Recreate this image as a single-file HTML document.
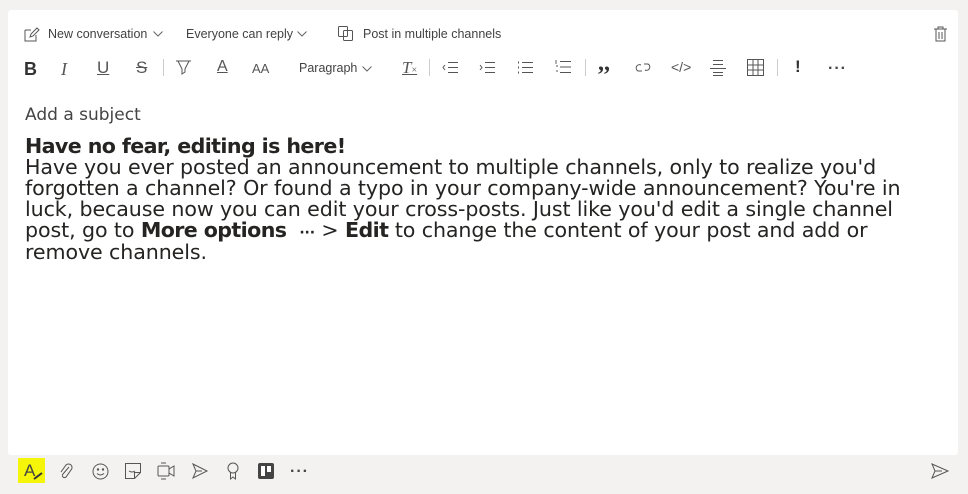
<!DOCTYPE html>
<html><head><meta charset="utf-8"><style>
html,body{margin:0;padding:0;width:968px;height:494px;background:#f3f2f1;overflow:hidden;font-family:"Liberation Sans",sans-serif;color:#252423}
.panel{position:absolute;left:8px;top:10px;width:950px;height:445px;background:#fff;border-radius:3px}
.a{position:absolute;white-space:nowrap}
.tb{font-size:12.5px;color:#424242}
svg{position:absolute;overflow:visible}
.body{font-family:"DejaVu Sans",sans-serif;font-size:20.6px;line-height:21px;color:#252423;letter-spacing:-0.1px}
.body div{white-space:nowrap;height:21px}
.body b{letter-spacing:-0.6px}
</style></head><body>
<div class="panel"></div>
<!-- top row -->
<svg style="left:24px;top:27px" width="15" height="15" viewBox="0 0 15 15" fill="none" stroke="#555" stroke-width="1"><path d="M1 3h6M1 3v11h11V8"/><path d="M6 10l1-3 6-6 2 2-6 6z"/></svg>
<div class="a tb" style="left:48px;top:27px">New conversation</div>
<svg style="left:153px;top:31px" width="10" height="6" fill="none" stroke="#666"><path d="M0.5 0.5l4.5 4.5 4.5-4.5"/></svg>
<div class="a tb" style="left:186px;top:27px">Everyone can reply</div>
<svg style="left:297px;top:31px" width="10" height="6" fill="none" stroke="#666"><path d="M0.5 0.5l4.5 4.5 4.5-4.5"/></svg>
<svg style="left:338px;top:26px" width="16" height="16" fill="none" stroke="#555"><rect x="0.5" y="0.5" width="9" height="10" rx="1"/><rect x="5.5" y="4.5" width="9" height="10" rx="1"/></svg>
<div class="a tb" style="left:363px;top:27px">Post in multiple channels</div>
<svg style="left:934px;top:26px" width="13" height="16" fill="none" stroke="#555"><path d="M0 3h13M4 3V1h5v2M2 3v12h9V3M5 6v7M8 6v7"/></svg>
<!-- format row -->
<div class="a" style="left:24px;top:59px;font-weight:bold;font-size:18px;color:#333">B</div>
<div class="a" style="left:61px;top:59px;font-style:italic;font-size:18px;color:#555;font-family:'Liberation Serif',serif">I</div>
<div class="a" style="left:97px;top:58px;font-size:17px;color:#555;text-decoration:underline">U</div>
<div class="a" style="left:136px;top:58px;font-size:17px;color:#555;text-decoration:line-through">S</div>
<div class="a" style="left:163px;top:59px;width:1px;height:17px;background:#ccc"></div>
<svg style="left:175px;top:60px" width="17" height="16" fill="none" stroke="#555"><path d="M1 1h15M3 1l4 8v5l3-2V9l4-8"/></svg>
<div class="a" style="left:217px;top:58px;font-size:16px;color:#555;text-decoration:underline">A</div>
<div class="a" style="left:252px;top:61px;font-size:13px;color:#555">AA</div>
<div class="a tb" style="left:299px;top:61px">Paragraph</div>
<svg style="left:362px;top:66px" width="10" height="6" fill="none" stroke="#666"><path d="M0.5 0.5l4.5 4.5 4.5-4.5"/></svg>
<div class="a" style="left:402px;top:58px;font-size:17px;color:#555;font-style:italic;text-decoration:underline;font-family:'Liberation Serif',serif">T<span style="font-size:10px;font-style:normal">×</span></div>
<div class="a" style="left:429px;top:59px;width:1px;height:17px;background:#ccc"></div>
<svg style="left:442px;top:61px" width="16" height="13" stroke="#555" fill="none"><path d="M6 1.5h10M6 6.5h10M6 11.5h10M3 4l-2 2.5 2 2.5"/></svg>
<svg style="left:479px;top:61px" width="16" height="13" stroke="#555" fill="none"><path d="M6 1.5h10M6 6.5h10M6 11.5h10M1 4l2 2.5-2 2.5"/></svg>
<svg style="left:517px;top:61px" width="17" height="13" stroke="#555" fill="none"><path d="M5 1.5h11M5 6.5h11M5 11.5h11"/><path d="M1 1.5h1M1 6.5h1M1 11.5h1" stroke-width="2"/></svg>
<svg style="left:555px;top:60px" width="17" height="15" stroke="#555" fill="none"><path d="M5 1.5h11M5 7h11M5 12.5h11M1 0v4M1 6h2M1 11h2" stroke-width="0.9"/></svg>
<div class="a" style="left:585px;top:59px;width:1px;height:17px;background:#ccc"></div>
<div class="a" style="left:598px;top:50px;font-size:24px;font-weight:bold;color:#333;font-family:'Liberation Serif',serif">,,</div>
<svg style="left:635px;top:61px" width="17" height="13" stroke="#555" fill="none"><path d="M6 4a3 3 0 1 0-3 6h4M10 9a3 3 0 1 0 3-6H9"/></svg>
<div class="a" style="left:671px;top:59px;font-size:14px;color:#555">&lt;/&gt;</div>
<svg style="left:710px;top:59px" width="16" height="17" stroke="#555" fill="none"><path d="M3 1.5h10M3 5.5h10M0 9.5h16M3 13.5h10M3 16.5h10"/></svg>
<svg style="left:747px;top:59px" width="17" height="17" stroke="#555" fill="none"><rect x="0.5" y="0.5" width="16" height="16"/><path d="M0.5 6h16M0.5 11h16M6 0.5v16M11 0.5v16"/></svg>
<div class="a" style="left:777px;top:59px;width:1px;height:17px;background:#ccc"></div>
<div class="a" style="left:795px;top:57px;font-size:17px;font-weight:bold;color:#333">!</div>
<div class="a" style="left:828px;top:60px;font-size:16px;font-weight:bold;color:#444;letter-spacing:1px">···</div>
<!-- subject -->
<div class="a" style="left:25px;top:105px;font-family:'DejaVu Sans',sans-serif;font-size:17px;color:#444">Add a subject</div>
<!-- body -->
<div class="a body" style="left:25px;top:136px">
<div><b>Have no fear, editing is here!</b></div>
<div>Have you ever posted an announcement to multiple channels, only to realize you'd</div>
<div>forgotten a channel? Or found a typo in your company-wide announcement? You're in</div>
<div>luck, because now you can edit your cross-posts. Just like you'd edit a single channel</div>
<div>post, go to <b>More options</b> &nbsp;<span style="font-size:14px;font-weight:bold">···</span> &gt; <b>Edit</b> to change the content of your post and add or</div>
<div style="margin-top:1px">remove channels.</div>
</div>
<!-- bottom bar -->
<div class="a" style="left:18px;top:458px;width:27px;height:25px;background:#f5f50a"></div>
<div class="a" style="left:24px;top:461px;font-size:17px;color:#444">A</div>
<svg style="left:33px;top:472px" width="10" height="8"><path d="M1 7l8-6" stroke="#333" stroke-width="2"/></svg>
<svg style="left:60px;top:463px" width="12" height="17" stroke="#555" fill="none"><path d="M9 4L3 11a2 2 0 0 0 3 3l5-7a3.5 3.5 0 0 0-5-5L1 9"/></svg>
<svg style="left:92px;top:463px" width="17" height="17" stroke="#555" fill="none"><circle cx="8.5" cy="8.5" r="7.5"/><path d="M5 10.5q3.5 3 7 0"/><circle cx="6" cy="6.5" r=".7" fill="#555"/><circle cx="11" cy="6.5" r=".7" fill="#555"/></svg>
<svg style="left:125px;top:463px" width="17" height="17" stroke="#555" fill="none"><path d="M0.5 0.5h15v9l-6 6h-9z M9.5 15.5v-6h6"/><path d="M4 8q3 2 6 0"/></svg>
<svg style="left:157px;top:462px" width="19" height="18" stroke="#555" fill="none"><rect x="1" y="4" width="11" height="10" rx="1"/><path d="M12 7l5-3v10l-5-3M4 1h5M4 17h5"/></svg>
<svg style="left:192px;top:463px" width="16" height="16" stroke="#555" fill="none"><path d="M1 1l14 7-14 7 3-7z M4 8h6"/></svg>
<svg style="left:227px;top:462px" width="12" height="18" stroke="#555" fill="none"><circle cx="6" cy="6" r="5"/><path d="M3.5 10v7l2.5-2 2.5 2v-7"/></svg>
<svg style="left:258px;top:463px" width="16" height="16"><rect x="0" y="0" width="16" height="16" rx="2" fill="#444"/><rect x="3" y="3" width="4" height="10" fill="#fff"/><rect x="9" y="3" width="4" height="6" fill="#fff"/></svg>
<div class="a" style="left:290px;top:463px;font-size:16px;font-weight:bold;color:#444;letter-spacing:1px">···</div>
<svg style="left:931px;top:463px" width="18" height="16" stroke="#555" fill="none"><path d="M1 1l16 7-16 7 3-7z M4 8h7"/></svg>
</body></html>
